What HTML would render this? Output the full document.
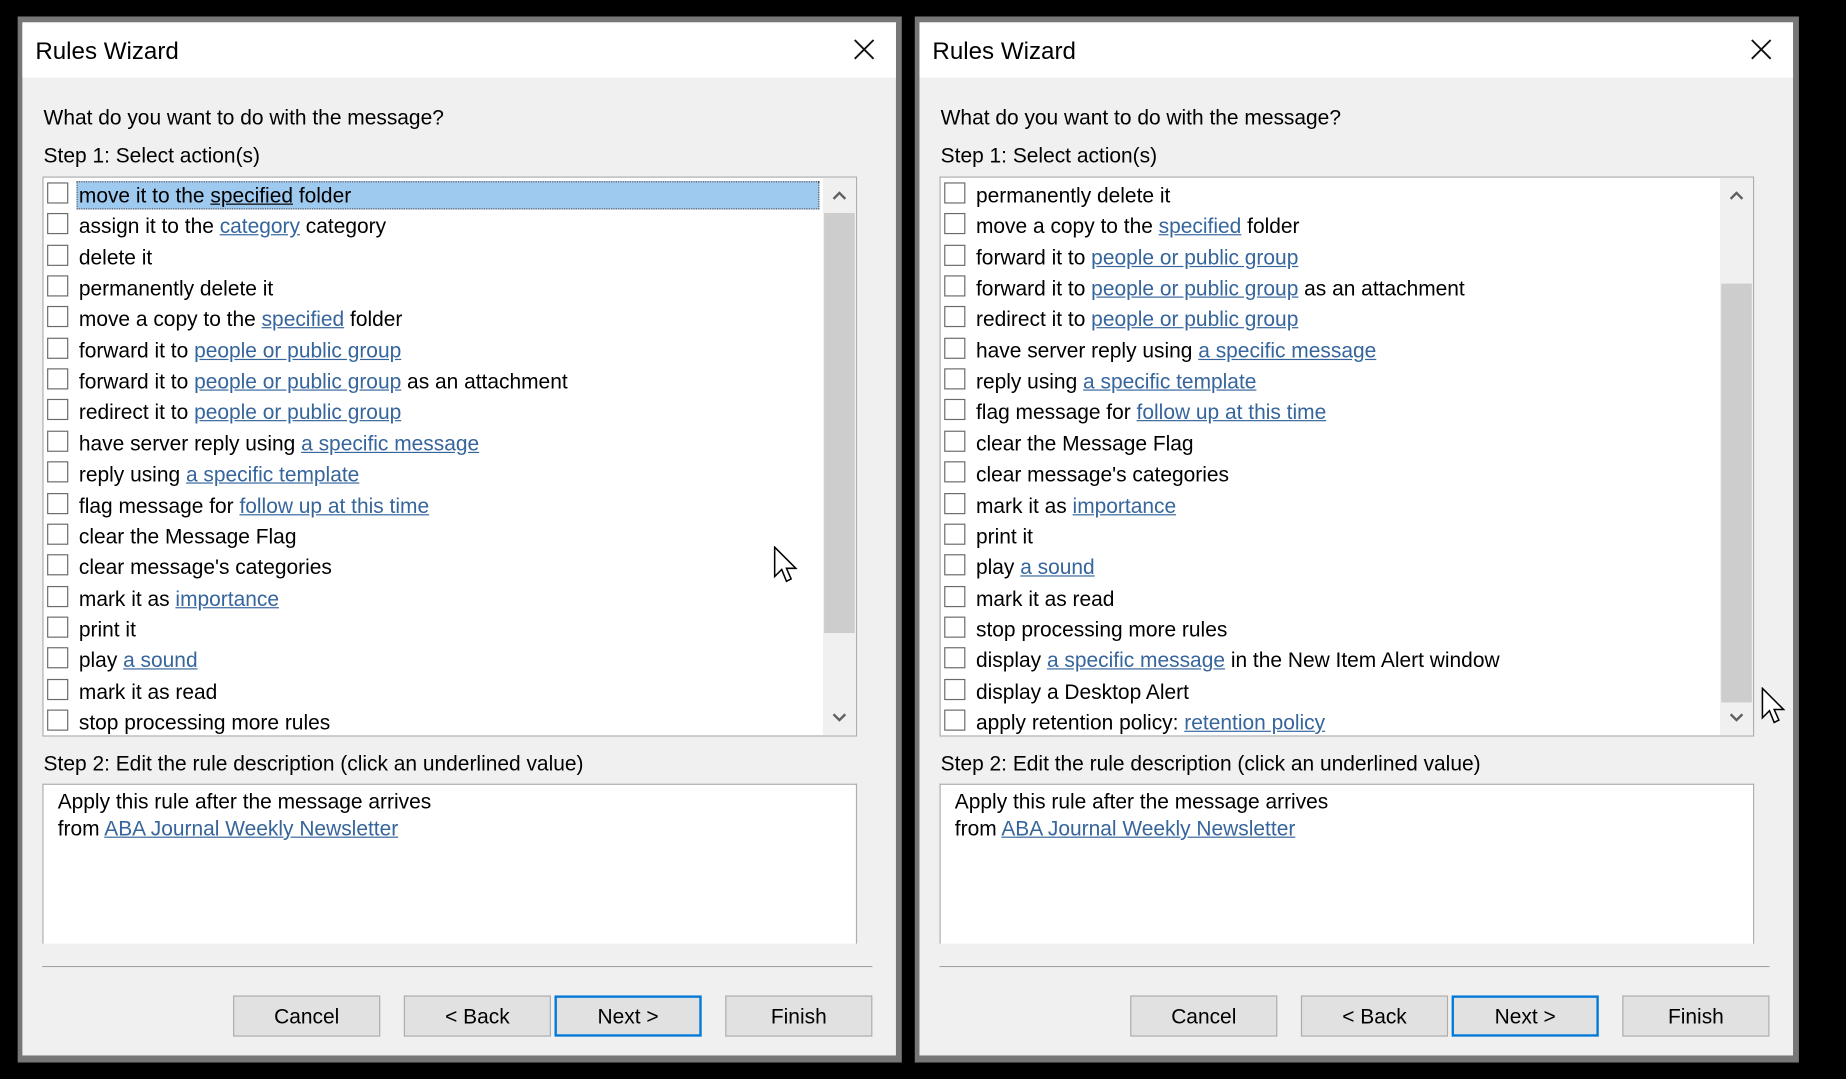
<!DOCTYPE html>
<html><head><meta charset="utf-8"><style>
html,body{margin:0;padding:0;background:#000;width:1846px;height:1079px;overflow:hidden}
#s{position:absolute;left:0;top:0;width:1568px;height:917px;transform-origin:0 0;transform:scale(1.17730,1.17666);font-family:"Liberation Sans",sans-serif;color:#000}
.dlg{position:absolute;top:14px;width:751px;height:889px;background:#777}
.in{position:absolute;left:4px;top:5px;right:5px;bottom:6px;background:#f0f0f0}
.tb{position:absolute;left:0;top:0;right:0;height:47px;background:#fff}
.tt{position:absolute;left:11px;top:13px;font-size:20.5px}
.x{position:absolute;right:18px;top:14px}
.t{position:absolute;font-size:17.8px;white-space:nowrap}
.lb{position:absolute;left:17px;top:131px;width:690px;height:474px;border:1px solid #adadad;background:#fff;overflow:hidden}
.row{position:absolute;left:0;height:26px;width:660px}
.cb{position:absolute;left:3px;top:3px;width:18px;height:18px;border:1px solid #6a6a6a;background:#fff;box-sizing:border-box}
.rt{position:absolute;left:30px;top:3px;font-size:17.8px;white-space:nowrap;line-height:22px}
a{color:#36659c;text-decoration:underline}
.sel{position:absolute;left:28px;top:2px;width:631px;height:24px;background:#9fcaf0;border:1px dotted #555;box-sizing:border-box}
.sb{position:absolute;right:0;top:0;width:28px;height:474px;background:#f0f0f0}
.th{position:absolute;left:1px;width:26px;background:#cdcdcd}
.desc{position:absolute;left:17px;top:647px;width:690px;height:135px;border:1px solid #adadad;border-bottom:none;background:#fff}
.sep{position:absolute;left:17px;top:802px;width:705px;height:1px;background:#a0a0a0;border-bottom:1px solid #fff}
.btn{position:absolute;top:827px;width:125px;height:35px;background:#e1e1e1;border:1px solid #adadad;box-sizing:border-box;font-size:17.8px;text-align:center;line-height:35px}
.nx{border:2px solid #0078d7;line-height:33px}
</style></head><body><div id="s">

<div class="dlg" style="left:15px"><div class="in">
<div class="tb"><div class="tt">Rules Wizard</div>
<svg class="x" width="18" height="18" viewBox="0 0 18 18"><path d="M1 1L17 17M17 1L1 17" stroke="#111" stroke-width="1.6"/></svg></div>
<div class="t" style="left:18px;top:71px">What do you want to do with the message?</div>
<div class="t" style="left:18px;top:103px">Step 1: Select action(s)</div>
<div class="lb">
<div class="row" style="top:1px"><div class="sel"></div><div class="cb"></div><div class="rt">move it to the <u>specified</u> folder</div></div>
<div class="row" style="top:27.35px"><div class="cb"></div><div class="rt">assign it to the <a>category</a> category</div></div>
<div class="row" style="top:53.7px"><div class="cb"></div><div class="rt">delete it</div></div>
<div class="row" style="top:80.05px"><div class="cb"></div><div class="rt">permanently delete it</div></div>
<div class="row" style="top:106.4px"><div class="cb"></div><div class="rt">move a copy to the <a>specified</a> folder</div></div>
<div class="row" style="top:132.75px"><div class="cb"></div><div class="rt">forward it to <a>people or public group</a></div></div>
<div class="row" style="top:159.1px"><div class="cb"></div><div class="rt">forward it to <a>people or public group</a> as an attachment</div></div>
<div class="row" style="top:185.45px"><div class="cb"></div><div class="rt">redirect it to <a>people or public group</a></div></div>
<div class="row" style="top:211.8px"><div class="cb"></div><div class="rt">have server reply using <a>a specific message</a></div></div>
<div class="row" style="top:238.15px"><div class="cb"></div><div class="rt">reply using <a>a specific template</a></div></div>
<div class="row" style="top:264.5px"><div class="cb"></div><div class="rt">flag message for <a>follow up at this time</a></div></div>
<div class="row" style="top:290.85px"><div class="cb"></div><div class="rt">clear the Message Flag</div></div>
<div class="row" style="top:317.2px"><div class="cb"></div><div class="rt">clear message's categories</div></div>
<div class="row" style="top:343.55px"><div class="cb"></div><div class="rt">mark it as <a>importance</a></div></div>
<div class="row" style="top:369.9px"><div class="cb"></div><div class="rt">print it</div></div>
<div class="row" style="top:396.25px"><div class="cb"></div><div class="rt">play <a>a sound</a></div></div>
<div class="row" style="top:422.6px"><div class="cb"></div><div class="rt">mark it as read</div></div>
<div class="row" style="top:448.95px"><div class="cb"></div><div class="rt">stop processing more rules</div></div>
<div class="sb"><div class="th" style="top:30px;height:357px"></div>
<svg style="position:absolute;left:8px;top:11px" width="12" height="8"><path d="M1 7L6 2L11 7" stroke="#606060" stroke-width="2" fill="none"/></svg>
<svg style="position:absolute;left:8px;top:455px" width="12" height="8"><path d="M1 1L6 6L11 1" stroke="#606060" stroke-width="2" fill="none"/></svg></div>
</div>
<div class="t" style="left:18px;top:620px">Step 2: Edit the rule description (click an underlined value)</div>
<div class="desc"><div class="t" style="left:12px;top:4px">Apply this rule after the message arrives</div>
<div class="t" style="left:12px;top:27px">from <a>ABA Journal Weekly Newsletter</a></div></div>
<div class="sep"></div>
<div class="btn" style="left:179px">Cancel</div>
<div class="btn" style="left:324px">&lt; Back</div>
<div class="btn nx" style="left:452px">Next &gt;</div>
<div class="btn" style="left:597px">Finish</div>
<svg style="position:absolute;left:638px;top:445px" width="24" height="36" viewBox="0 0 24 36"><path d="M1 1L1 26L7 20L11 30L15 28L11 19L19 19Z" fill="#fff" stroke="#000" stroke-width="1.3"/></svg>
</div></div>

<div class="dlg" style="left:777px"><div class="in">
<div class="tb"><div class="tt">Rules Wizard</div>
<svg class="x" width="18" height="18" viewBox="0 0 18 18"><path d="M1 1L17 17M17 1L1 17" stroke="#111" stroke-width="1.6"/></svg></div>
<div class="t" style="left:18px;top:71px">What do you want to do with the message?</div>
<div class="t" style="left:18px;top:103px">Step 1: Select action(s)</div>
<div class="lb">
<div class="row" style="top:1px"><div class="cb"></div><div class="rt">permanently delete it</div></div>
<div class="row" style="top:27.35px"><div class="cb"></div><div class="rt">move a copy to the <a>specified</a> folder</div></div>
<div class="row" style="top:53.7px"><div class="cb"></div><div class="rt">forward it to <a>people or public group</a></div></div>
<div class="row" style="top:80.05px"><div class="cb"></div><div class="rt">forward it to <a>people or public group</a> as an attachment</div></div>
<div class="row" style="top:106.4px"><div class="cb"></div><div class="rt">redirect it to <a>people or public group</a></div></div>
<div class="row" style="top:132.75px"><div class="cb"></div><div class="rt">have server reply using <a>a specific message</a></div></div>
<div class="row" style="top:159.1px"><div class="cb"></div><div class="rt">reply using <a>a specific template</a></div></div>
<div class="row" style="top:185.45px"><div class="cb"></div><div class="rt">flag message for <a>follow up at this time</a></div></div>
<div class="row" style="top:211.8px"><div class="cb"></div><div class="rt">clear the Message Flag</div></div>
<div class="row" style="top:238.15px"><div class="cb"></div><div class="rt">clear message's categories</div></div>
<div class="row" style="top:264.5px"><div class="cb"></div><div class="rt">mark it as <a>importance</a></div></div>
<div class="row" style="top:290.85px"><div class="cb"></div><div class="rt">print it</div></div>
<div class="row" style="top:317.2px"><div class="cb"></div><div class="rt">play <a>a sound</a></div></div>
<div class="row" style="top:343.55px"><div class="cb"></div><div class="rt">mark it as read</div></div>
<div class="row" style="top:369.9px"><div class="cb"></div><div class="rt">stop processing more rules</div></div>
<div class="row" style="top:396.25px"><div class="cb"></div><div class="rt">display <a>a specific message</a> in the New Item Alert window</div></div>
<div class="row" style="top:422.6px"><div class="cb"></div><div class="rt">display a Desktop Alert</div></div>
<div class="row" style="top:448.95px"><div class="cb"></div><div class="rt">apply retention policy: <a>retention policy</a></div></div>
<div class="sb"><div class="th" style="top:90px;height:356px"></div>
<svg style="position:absolute;left:8px;top:11px" width="12" height="8"><path d="M1 7L6 2L11 7" stroke="#606060" stroke-width="2" fill="none"/></svg>
<svg style="position:absolute;left:8px;top:455px" width="12" height="8"><path d="M1 1L6 6L11 1" stroke="#606060" stroke-width="2" fill="none"/></svg></div>
</div>
<div class="t" style="left:18px;top:620px">Step 2: Edit the rule description (click an underlined value)</div>
<div class="desc"><div class="t" style="left:12px;top:4px">Apply this rule after the message arrives</div>
<div class="t" style="left:12px;top:27px">from <a>ABA Journal Weekly Newsletter</a></div></div>
<div class="sep"></div>
<div class="btn" style="left:179px">Cancel</div>
<div class="btn" style="left:324px">&lt; Back</div>
<div class="btn nx" style="left:452px">Next &gt;</div>
<div class="btn" style="left:597px">Finish</div>
<svg style="position:absolute;left:715px;top:565px" width="24" height="36" viewBox="0 0 24 36"><path d="M1 1L1 26L7 20L11 30L15 28L11 19L19 19Z" fill="#fff" stroke="#000" stroke-width="1.3"/></svg>
</div></div>

</div></body></html>
